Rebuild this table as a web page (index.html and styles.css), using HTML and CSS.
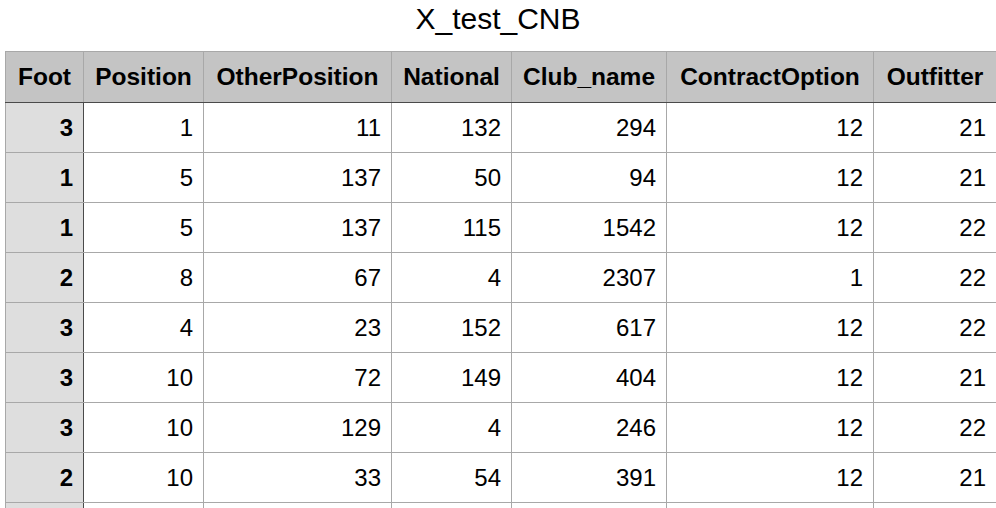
FILE: index.html
```html
<!DOCTYPE html>
<html>
<head>
<meta charset="utf-8">
<link rel="stylesheet" href="styles.css">
</head>
<body>
<div class="title">X_test_CNB</div>
<div class="wrap">
<table class="grid">
<colgroup>
<col class="c1"><col class="c2"><col class="c3"><col class="c4"><col class="c5"><col class="c6"><col class="c7">
</colgroup>
<thead>
<tr><th class="idx">Foot</th><th>Position</th><th>OtherPosition</th><th>National</th><th>Club_name</th><th>ContractOption</th><th>Outfitter</th></tr>
</thead>
<tbody>
<tr><td class="idx">3</td><td>1</td><td>11</td><td>132</td><td>294</td><td>12</td><td>21</td></tr>
<tr><td class="idx">1</td><td>5</td><td>137</td><td>50</td><td>94</td><td>12</td><td>21</td></tr>
<tr><td class="idx">1</td><td>5</td><td>137</td><td>115</td><td>1542</td><td>12</td><td>22</td></tr>
<tr><td class="idx">2</td><td>8</td><td>67</td><td>4</td><td>2307</td><td>1</td><td>22</td></tr>
<tr><td class="idx">3</td><td>4</td><td>23</td><td>152</td><td>617</td><td>12</td><td>22</td></tr>
<tr><td class="idx">3</td><td>10</td><td>72</td><td>149</td><td>404</td><td>12</td><td>21</td></tr>
<tr><td class="idx">3</td><td>10</td><td>129</td><td>4</td><td>246</td><td>12</td><td>22</td></tr>
<tr><td class="idx">2</td><td>10</td><td>33</td><td>54</td><td>391</td><td>12</td><td>21</td></tr>
<tr><td class="idx"></td><td></td><td></td><td></td><td></td><td></td><td></td></tr>
</tbody>
</table>
</div>
</body>
</html>
```
FILE: styles.css
```css
html, body {
  margin: 0;
  padding: 0;
  background: #ffffff;
  overflow: hidden;
  font-family: "Liberation Sans", Arial, Helvetica, sans-serif;
  color: #000;
}
.title {
  height: 51px;
  box-sizing: border-box;
  padding-top: 3px;
  text-align: center;
  font-size: 30px;
  line-height: 32px;
}
.wrap {
  padding-left: 5px;
}
.grid {
  border-collapse: collapse;
  table-layout: fixed;
  width: 991px;
  font-size: 24px;
}
.c1 { width: 78px; }
.c2 { width: 120px; }
.c3 { width: 188px; }
.c4 { width: 120px; }
.c5 { width: 155px; }
.c6 { width: 207px; }
.c7 { width: 123px; }
.grid th, .grid td {
  border: 1px solid #a8a8a8;
  padding: 0 10px 0 0;
  text-align: right;
  white-space: nowrap;
}
.grid th {
  background: #c4c4c4;
  font-weight: bold;
  font-size: 24.5px;
  height: 50px;
  text-align: center;
  padding: 0 6px;
  border-bottom: 1px solid #4a4a4a;
}
.grid td {
  height: 49px;
}
.grid td.idx {
  background: #dedede;
  font-weight: bold;
  border-right: 1px solid #4a4a4a;
}
```
